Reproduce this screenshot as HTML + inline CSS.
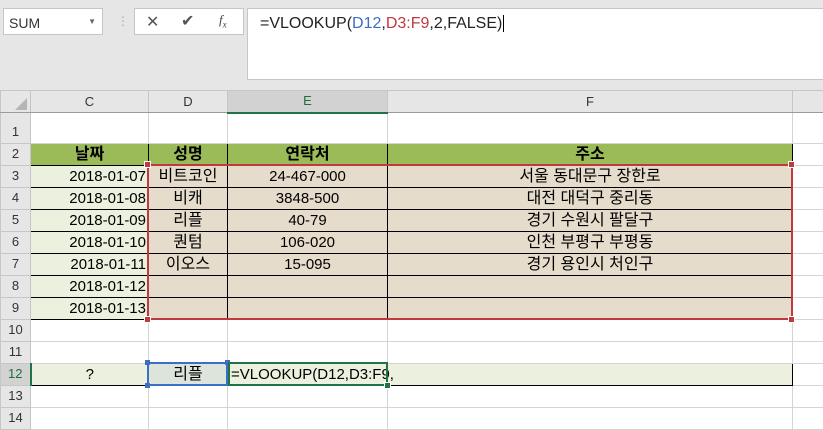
<!DOCTYPE html><html><head><meta charset="utf-8"><style>
*{margin:0;padding:0;box-sizing:border-box}
body{width:823px;height:412px;overflow:hidden;background:#e6e6e6;font-family:"Liberation Sans","Noto Sans CJK KR",sans-serif;position:relative;color:#000}
.abs{position:absolute}
table{position:absolute;left:0;top:90px;width:823px;border-collapse:collapse;table-layout:fixed;background:#fff}
td{border:1px solid #d4d4d4;font-size:15px;line-height:18px;padding:0 2px;white-space:nowrap;overflow:hidden;height:22px;max-height:22px;text-align:center}
td.rh{background:#e6e6e6;color:#333;font-size:13px;border-color:#c6c6c6;text-align:center;vertical-align:bottom;padding-bottom:2px}
tr.ch td{background:#e6e6e6;color:#333;font-size:13px;border-color:#c6c6c6;border-bottom:1px solid #9b9b9b}
.g{background:#9bbb59;border:1px solid #000;font-weight:bold;font-size:16px}
.c{background:#ebf1de;border:1px solid #000;text-align:right}
.b{background:#e6dccb;border:1px solid #000}
.k{font-size:16px}
.l{background:#ebf1de;border:1px solid #000}
</style></head><body>
<div class="abs" style="left:3px;top:8px;width:100px;height:27px;background:#fff;border:1px solid #c6c6c6;font-size:14px;color:#333;padding:6px 5px">SUM<span style="position:absolute;right:6px;top:8px;font-size:8px;color:#666">▼</span></div>
<div class="abs" style="left:117px;top:14px;color:#aaa;font-size:12px">⋮</div>
<div class="abs" style="left:134px;top:8px;width:110px;height:27px;background:#fff;border:1px solid #c6c6c6"></div>
<div class="abs" style="left:146px;top:12px;font-size:16px;color:#555">✕</div>
<div class="abs" style="left:181px;top:11px;font-size:16px;color:#555">✔</div>
<div class="abs" style="left:219px;top:12px;font-size:13px;color:#444;font-style:italic;font-family:'Liberation Serif',serif">f<sub style="font-size:9px">x</sub></div>
<div class="abs" style="left:247px;top:8px;width:576px;height:72px;background:#fff;border:1px solid #c6c6c6;border-right:none;font-size:16px;padding:6px 12px;color:#222">=VLOOKUP(<span style="color:#3a6fc5">D12</span>,<span style="color:#c0393f">D3:F9</span>,2,FALSE)<span style="border-left:1px solid #000;margin-left:1px"></span></div>
<table>
<colgroup><col style="width:30px"><col style="width:118px"><col style="width:79px"><col style="width:160px"><col style="width:405px"><col style="width:31px"></colgroup>
<tr class="ch"><td style="text-align:right;padding:0;vertical-align:bottom"><svg width="16" height="16" style="display:block;margin-left:12px"><path d="M2 14H14V2Z" fill="#b5b5b5"/></svg></td><td>C</td><td>D</td><td style="background:#d2d2d2;border-bottom:2px solid #217346;color:#1e6e3f">E</td><td>F</td><td style="border-right:none"></td></tr>
<tr style="height:31px"><td class="rh" style="height:31px">1</td><td></td><td></td><td></td><td></td><td></td></tr>
<tr><td class="rh">2</td><td class="g">날짜</td><td class="g">성명</td><td class="g">연락처</td><td class="g">주소</td><td></td></tr>
<tr><td class="rh">3</td><td class="c">2018-01-07</td><td class="b k">비트코인</td><td class="b">24-467-000</td><td class="b k">서울 동대문구 장한로</td><td></td></tr>
<tr><td class="rh">4</td><td class="c">2018-01-08</td><td class="b k">비캐</td><td class="b">3848-500</td><td class="b k">대전 대덕구 중리동</td><td></td></tr>
<tr><td class="rh">5</td><td class="c">2018-01-09</td><td class="b k">리플</td><td class="b">40-79</td><td class="b k">경기 수원시 팔달구</td><td></td></tr>
<tr><td class="rh">6</td><td class="c">2018-01-10</td><td class="b k">퀀텀</td><td class="b">106-020</td><td class="b k">인천 부평구 부평동</td><td></td></tr>
<tr><td class="rh">7</td><td class="c">2018-01-11</td><td class="b k">이오스</td><td class="b">15-095</td><td class="b k">경기 용인시 처인구</td><td></td></tr>
<tr><td class="rh">8</td><td class="c">2018-01-12</td><td class="b"></td><td class="b"></td><td class="b"></td><td></td></tr>
<tr><td class="rh">9</td><td class="c">2018-01-13</td><td class="b"></td><td class="b"></td><td class="b"></td><td></td></tr>
<tr><td class="rh">10</td><td></td><td></td><td></td><td></td><td></td></tr>
<tr><td class="rh">11</td><td></td><td></td><td></td><td></td><td></td></tr>
<tr><td class="rh" style="background:#d2d2d2;color:#1e6e3f;border-right:2px solid #217346">12</td><td class="l">?</td><td class="l k" style="background:#dde4dc">리플</td><td class="l"></td><td class="l"></td><td></td></tr>
<tr><td class="rh">13</td><td></td><td></td><td></td><td></td><td></td></tr>
<tr><td class="rh">14</td><td></td><td></td><td></td><td></td><td></td></tr>
</table>
<div class="abs" style="left:231px;top:365px;font-size:15px;line-height:20px">=VLOOKUP(D12,D3:F9,</div>
<div class="abs" style="left:147px;top:164px;width:646px;height:156px;border:2px solid #c0393f"></div>
<div class="abs" style="left:145px;top:162px;width:5px;height:5px;background:#c0393f;outline:1px solid #fff"></div>
<div class="abs" style="left:789px;top:162px;width:5px;height:5px;background:#c0393f;outline:1px solid #fff"></div>
<div class="abs" style="left:145px;top:317px;width:5px;height:5px;background:#c0393f;outline:1px solid #fff"></div>
<div class="abs" style="left:789px;top:317px;width:5px;height:5px;background:#c0393f;outline:1px solid #fff"></div>
<div class="abs" style="left:147px;top:362px;width:81px;height:24px;border:2px solid #3a6fc5"></div>
<div class="abs" style="left:145px;top:360px;width:5px;height:5px;background:#3a6fc5"></div>
<div class="abs" style="left:225px;top:360px;width:5px;height:5px;background:#3a6fc5"></div>
<div class="abs" style="left:145px;top:383px;width:5px;height:5px;background:#3a6fc5"></div>
<div class="abs" style="left:228px;top:362px;width:160px;height:24px;border:2px solid #217346"></div>
<div class="abs" style="left:385px;top:383px;width:5px;height:5px;background:#217346;outline:1px solid #fff"></div>
</body></html>
